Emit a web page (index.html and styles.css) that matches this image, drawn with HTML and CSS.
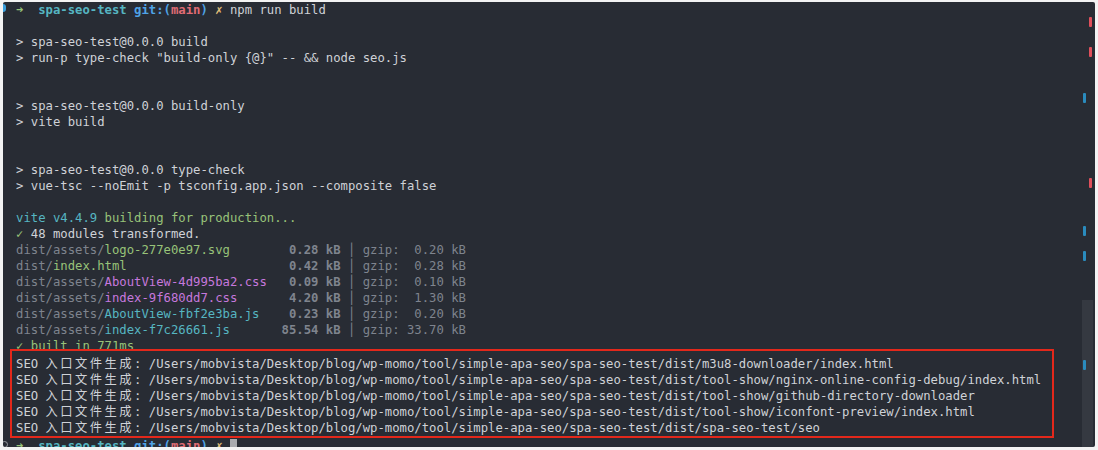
FILE: index.html
```html
<!DOCTYPE html>
<html>
<head>
<meta charset="utf-8">
<link rel="stylesheet" href="styles.css">
</head>
<body>
<div class="term">
  <div class="ln"><span class="g1 gr">➜</span>  <b class="cy">spa-seo-test</b> <b class="bl">git:(</b><b class="rd">main</b><b class="bl">)</b> <span class="g1 ye">✗</span> npm run build</div>
  <div class="ln"></div>
  <div class="ln">&gt; spa-seo-test@0.0.0 build</div>
  <div class="ln">&gt; run-p type-check "build-only {@}" -- &amp;&amp; node seo.js</div>
  <div class="ln"></div>
  <div class="ln"></div>
  <div class="ln">&gt; spa-seo-test@0.0.0 build-only</div>
  <div class="ln">&gt; vite build</div>
  <div class="ln"></div>
  <div class="ln"></div>
  <div class="ln">&gt; spa-seo-test@0.0.0 type-check</div>
  <div class="ln">&gt; vue-tsc --noEmit -p tsconfig.app.json --composite false</div>
  <div class="ln"></div>
  <div class="ln"><span class="cy">vite v4.4.9</span> <span class="gr">building for production...</span></div>
  <div class="ln"><span class="g1 gr">✓</span> 48 modules transformed.</div>
  <div class="ln"><span class="dim">dist/assets/</span><span class="gr">logo-277e0e97.svg</span>       <b class="dim"> 0.28 kB</b><span class="dim"> │ gzip:  0.20 kB</span></div>
  <div class="ln"><span class="dim">dist/</span><span class="gr">index.html</span>                     <b class="dim"> 0.42 kB</b><span class="dim"> │ gzip:  0.28 kB</span></div>
  <div class="ln"><span class="dim">dist/assets/</span><span class="mg">AboutView-4d995ba2.css</span>  <b class="dim"> 0.09 kB</b><span class="dim"> │ gzip:  0.10 kB</span></div>
  <div class="ln"><span class="dim">dist/assets/</span><span class="mg">index-9f680dd7.css</span>      <b class="dim"> 4.20 kB</b><span class="dim"> │ gzip:  1.30 kB</span></div>
  <div class="ln"><span class="dim">dist/assets/</span><span class="cy">AboutView-fbf2e3ba.js</span>   <b class="dim"> 0.23 kB</b><span class="dim"> │ gzip:  0.20 kB</span></div>
  <div class="ln"><span class="dim">dist/assets/</span><span class="cy">index-f7c26661.js</span>       <b class="dim">85.54 kB</b><span class="dim"> │ gzip: 33.70 kB</span></div>
  <div class="ln"><span class="gr"><span class="g1">✓</span> built in 771ms</span></div>
  <div class="anno">
    <div class="ln">SEO <span class="cjk">入口文件生成</span>: /Users/mobvista/Desktop/blog/wp-momo/tool/simple-apa-seo/spa-seo-test/dist/m3u8-downloader/index.html</div>
    <div class="ln">SEO <span class="cjk">入口文件生成</span>: /Users/mobvista/Desktop/blog/wp-momo/tool/simple-apa-seo/spa-seo-test/dist/tool-show/nginx-online-config-debug/index.html</div>
    <div class="ln">SEO <span class="cjk">入口文件生成</span>: /Users/mobvista/Desktop/blog/wp-momo/tool/simple-apa-seo/spa-seo-test/dist/tool-show/github-directory-downloader</div>
    <div class="ln">SEO <span class="cjk">入口文件生成</span>: /Users/mobvista/Desktop/blog/wp-momo/tool/simple-apa-seo/spa-seo-test/dist/tool-show/iconfont-preview/index.html</div>
    <div class="ln">SEO <span class="cjk">入口文件生成</span>: /Users/mobvista/Desktop/blog/wp-momo/tool/simple-apa-seo/spa-seo-test/dist/spa-seo-test/seo</div>
  </div>
  <div class="ln"><span class="g1 gr">➜</span>  <b class="cy">spa-seo-test</b> <b class="bl">git:(</b><b class="rd">main</b><b class="bl">)</b> <span class="g1 ye">✗</span> <span class="cursor"></span></div>

  <div class="mark-dot"></div>
  <div class="mark-ring"></div>
  <div class="thumb"></div>
  <div class="tick red t1"></div>
  <div class="tick red t2"></div>
  <div class="tick red t3"></div>
  <div class="tick blue t4"></div>
  <div class="tick blue t5"></div>
  <div class="tick blue t6"></div>
  <div class="tick blue t7"></div>
</div>
</body>
</html>
```
FILE: styles.css
```css
html, body {
  margin: 0;
  padding: 0;
  background: #f3f3f3;
}
body {
  padding: 2px 0 0 3px;
}
.term {
  position: relative;
  width: 1079px;
  height: 445px;
  padding-left: 13px;
  background: #282c34;
  overflow: hidden;
  font-family: "DejaVu Sans Mono", "Noto Sans CJK SC", monospace;
  font-size: 12.25px;
  line-height: 16px;
  color: #cfd2d7;
  border-radius: 2px;
}
.ln {
  height: 16px;
  white-space: pre;
}
b { font-weight: bold; }
.g1 {
  display: inline-block;
  width: 7.377px;
  text-align: left;
}
.gr { color: #98c379; }
.cy { color: #56b6c2; }
.bl { color: #4fa3e6; }
.rd { color: #e06c75; }
.ye { color: #e5c07b; }
.mg { color: #c678dd; }
.dim { color: #7f848e; }
.cjk {
  font-family: "Noto Sans CJK SC", sans-serif;
  letter-spacing: 2.5px;
}
.anno {
  position: relative;
  width: 1044px;
  box-sizing: border-box;
  margin: -5px 0 0 -6px;
  padding: 4px 0 0 4px;
  height: 89px;
  border: 2px solid #e3281b;
  background: #282c34;
}
.cursor {
  display: inline-block;
  width: 7px;
  height: 14px;
  vertical-align: -3px;
  background: #a9abaf;
}
.mark-dot {
  position: absolute;
  left: -3px;
  top: 2px;
  width: 6px;
  height: 8px;
  border-radius: 3px;
  background: #3a9fdc;
}
.mark-ring {
  position: absolute;
  left: -2px;
  top: 439px;
  width: 5px;
  height: 5px;
  border-radius: 50%;
  border: 1px solid #9a9da3;
}
.thumb {
  position: absolute;
  left: 1079px;
  top: 298px;
  width: 11px;
  bottom: 0;
  background: #353941;
}
.tick {
  position: absolute;
  width: 3px;
  height: 10px;
  border-radius: 1px;
}
.red { left: 1086px; background: #e0505c; }
.blue { left: 1080px; background: #2a8bbd; }
.t1 { top: 15px; }
.t2 { top: 45px; }
.t3 { top: 176px; }
.t4 { top: 91px; }
.t5 { top: 224px; }
.t6 { top: 249px; }
.t7 { top: 358px; }
```
